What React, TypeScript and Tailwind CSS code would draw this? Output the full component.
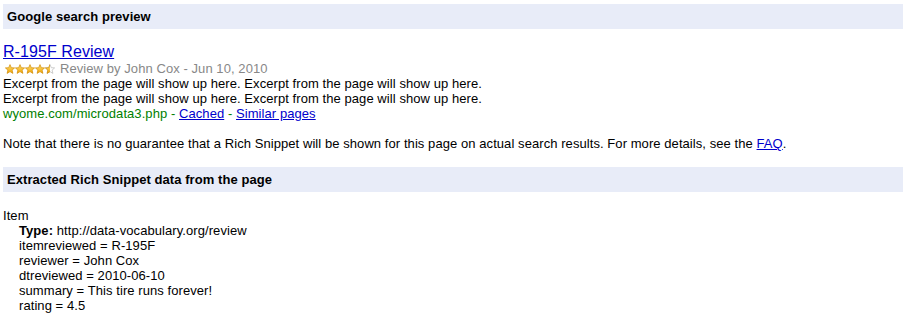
import React from "react";

function Star({ half = false }: { half?: boolean }) {
	const pts = "5,0.6 6.3,3.7 9.6,3.9 7.1,6.1 7.9,9.4 5,7.6 2.1,9.4 2.9,6.1 0.4,3.9 3.7,3.7";
	return (
		<svg width="10" height="10" viewBox="0 0 10 10" className="block">
			<defs>
				<linearGradient id="sg" x1="0" y1="0" x2="0" y2="1">
					<stop offset="0" stopColor="#fde37a" />
					<stop offset="1" stopColor="#f2a300" />
				</linearGradient>
				<clipPath id="halfclip">
					<rect x="0" y="0" width="5" height="10" />
				</clipPath>
			</defs>
			{half ? (
				<>
					<polygon points={pts} fill="#fff" stroke="#b9b9b9" strokeWidth="0.7" />
					<polygon points={pts} fill="url(#sg)" stroke="#d08a00" strokeWidth="0.7" clipPath="url(#halfclip)" />
				</>
			) : (
				<polygon points={pts} fill="url(#sg)" stroke="#d08a00" strokeWidth="0.7" />
			)}
		</svg>
	);
}

function Bar({ children }: { children: React.ReactNode }) {
	return (
		<div className="h-[25px] bg-[#e8ecf8] flex items-center px-[4px] font-bold text-[13px]">
			{children}
		</div>
	);
}

export default function App() {
	const props = [
		"itemreviewed = R-195F",
		"reviewer = John Cox",
		"dtreviewed = 2010-06-10",
		"summary = This tire runs forever!",
		"rating = 4.5",
	];
	return (
		<div className="w-[905px] h-[320px] bg-white pl-[3px] pr-[2px] pt-[4px] text-[13px] leading-[15px] tracking-[0.07px] text-black font-['Liberation_Sans',Arial,sans-serif]">
			<Bar>Google search preview</Bar>
			<div className="pt-[13px]">
				<a href="#" className="text-[16px] leading-[19px] text-[#0000cc] underline block w-fit">
					R-195F Review
				</a>
				<div className="flex items-center gap-[5px] text-[#888888]">
					<div className="flex pl-[2px]">
						<Star />
						<Star />
						<Star />
						<Star />
						<Star half />
					</div>
					<span>Review by John Cox - Jun 10, 2010</span>
				</div>
				<div>
					Excerpt from the page will show up here. Excerpt from the page will show up here.
					<br />
					Excerpt from the page will show up here. Excerpt from the page will show up here.
				</div>
				<div>
					<span className="text-[#008000]">wyome.com/microdata3.php</span>
					<span className="text-[#008000]"> - </span>
					<a href="#" className="text-[#0000cc] underline">Cached</a>
					<span className="text-[#008000]"> - </span>
					<a href="#" className="text-[#0000cc] underline">Similar pages</a>
				</div>
			</div>
			<p className="mt-[15px] mb-[16px]">
				Note that there is no guarantee that a Rich Snippet will be shown for this page on actual search
				results. For more details, see the{" "}
				<a href="#" className="text-[#0000cc] underline">FAQ</a>.
			</p>
			<Bar>Extracted Rich Snippet data from the page</Bar>
			<div className="pt-[16px]">
				<div>Item</div>
				<div className="pl-[16px]">
					<div>
						<span className="font-bold">Type:</span> http://data-vocabulary.org/review
					</div>
					{props.map((p) => (
						<div key={p}>{p}</div>
					))}
				</div>
			</div>
		</div>
	);
}
